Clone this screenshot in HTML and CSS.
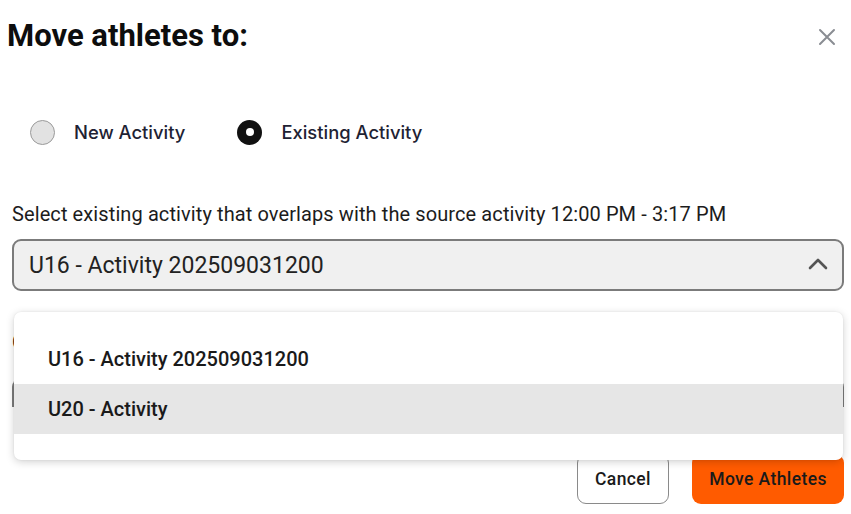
FILE: index.html
```html
<!DOCTYPE html>
<html>
<head>
<meta charset="utf-8">
<link rel="stylesheet" href="styles.css">
</head>
<body>
<div class="dialog">
  <div class="header">
    <h1 class="title">Move athletes to:</h1>
    <button class="close" aria-label="Close">
      <svg width="18" height="18" viewBox="0 0 18 18"><path d="M2 2L16 16M16 2L2 16" stroke="#8a8d93" stroke-width="2" stroke-linecap="round"/></svg>
    </button>
  </div>

  <div class="radios">
    <label class="radio"><span class="dot"></span><span class="radio-label">New Activity</span></label>
    <label class="radio checked"><span class="dot"></span><span class="radio-label">Existing Activity</span></label>
  </div>

  <div class="field-label">Select existing activity that overlaps with the source activity 12:00 PM - 3:17 PM</div>

  <div class="select-wrap">
    <div class="select">
      <span class="select-value">U16 - Activity 202509031200</span>
      <svg class="chevron" width="20" height="12" viewBox="0 0 20 12"><path d="M2 10L10 2L18 10" fill="none" stroke="#555" stroke-width="2.6" stroke-linecap="round" stroke-linejoin="round"/></svg>
    </div>
    <ul class="menu">
      <li class="option">U16 - Activity 202509031200</li>
      <li class="option active">U20 - Activity</li>
    </ul>
  </div>

  <div class="field-label second">Comment</div>
  <div class="input"></div>

  <div class="footer">
    <button class="btn cancel">Cancel</button>
    <button class="btn primary">Move Athletes</button>
  </div>
</div>
</body>
</html>
```

FILE: styles.css
```css
* { box-sizing: border-box; }
html, body { margin: 0; padding: 0; background: #fff; }
body { font-family: Roboto, "Liberation Sans", sans-serif; color: #1d1d1f; width: 851px; height: 514px; overflow: hidden; }

.dialog { padding: 0 7px 0 12px; }

.header { display: flex; justify-content: space-between; align-items: flex-start; height: 70px; }
.title { margin: 17px 0 0 -5px; font-size: 31px; font-weight: 700; line-height: 38px; color: #0d0d0d; }
.close { margin: 28px 8px 0 0; padding: 0; border: 0; background: none; width: 18px; height: 18px; display: flex; }

.radios { display: flex; align-items: center; gap: 52px; padding-left: 18px; margin-top: 49px; }
.radio { display: flex; align-items: center; gap: 19px; }
.dot { width: 25px; height: 25px; border-radius: 50%; background: #e2e2e2; border: 1.5px solid #9a9a9a; display: block; position: relative; }
.checked .dot { background: #111; border: 0; }
.checked .dot::after { content: ""; position: absolute; left: 8.5px; top: 8.5px; width: 8px; height: 8px; border-radius: 50%; background: #fff; }
.radio-label { font-family: Inter, Roboto, sans-serif; font-size: 18.4px; font-weight: 500; color: #1e2233; line-height: 26px; letter-spacing: 0; }

.field-label { margin-top: 58px; font-size: 20px; line-height: 22px; color: #1c1c1c; letter-spacing: 0.1px; }
.field-label.second { margin-top: 40px; }

.select-wrap { position: relative; margin-top: 14px; }
.select { height: 52px; border: 2px solid #7b7b7b; border-radius: 9px; background: #f0f0f0; display: flex; align-items: center; justify-content: space-between; padding: 0 14px 0 15px; }
.select-value { font-size: 23px; color: #222; }
.chevron { margin-top: -2px; }

.menu { position: absolute; left: 2px; right: 1px; top: 73px; margin: 0; padding: 22px 0 26px; list-style: none; background: #fff; border-radius: 7px; box-shadow: 0 2px 8px rgba(0,0,0,0.18), 0 0 2px rgba(0,0,0,0.08); z-index: 5; }
.option { height: 50px; line-height: 50px; padding-left: 34px; font-size: 20px; font-weight: 500; color: #1a1a1a; }
.option.active { background: #e6e6e6; }

.input { margin-top: 26px; height: 28px; border: 2px solid #7b7b7b; border-bottom: 0; border-radius: 8px 8px 0 0; background: #f0f0f0; }

.footer { display: flex; justify-content: flex-end; gap: 23px; margin-top: 47px; }
.btn { height: 50px; border-radius: 9px; font-family: Roboto, sans-serif; font-size: 17.5px; font-weight: 500; color: #1a1a1a; letter-spacing: 0.4px; cursor: pointer; }
.cancel { width: 92px; background: #fff; border: 1.5px solid #8a8a8a; }
.primary { width: 152px; background: #ff5b00; border: 0; }
```
